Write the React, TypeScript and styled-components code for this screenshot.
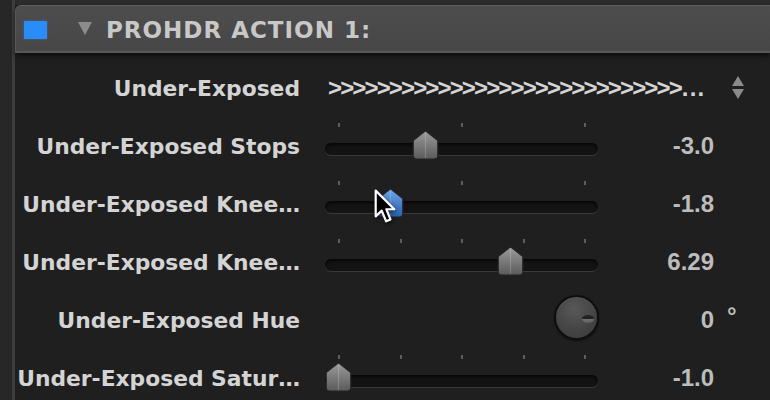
import React from "react";
import styled, { createGlobalStyle } from "styled-components";

const Global = createGlobalStyle`
  html, body { margin: 0; padding: 0; background: #1f1f1f; }
  #root { width: 770px; height: 400px; }
`;

const Page = styled.div`
  display: flex;
  width: 770px;
  height: 400px;
  overflow: hidden;
  background: #1f1f1f;
`;

const Gutter = styled.div`
  flex-shrink: 0;
  width: 12px;
  background: #272727;
  border-right: 3px solid #3d3d3d;
`;

const Panel = styled.div`
  flex: 1;
  display: flex;
  flex-direction: column;
  padding-top: 5px;
  background: linear-gradient(#2b2b2b 0 5px, #1f1f1f 5px);
`;

const Header = styled.div`
  position: relative;
  z-index: 1;
  flex-shrink: 0;
  height: 45px;
  display: flex;
  align-items: center;
  padding-left: 8px;
  background: linear-gradient(#4d4d4d, #474747);
  border-top: 1px solid #5e5e5e;
  border-left: 1px solid #575757;
  border-bottom: 2px solid #585858;
  border-top-left-radius: 6px;
  box-shadow: 0 3px 5px rgba(0, 0, 0, 0.6);
`;

const ColorChip = styled.span`
  width: 23px;
  height: 18px;
  margin-top: 2px;
  border-radius: 1px;
  background: #2a8cf8;
  box-shadow: 0 0 2px rgba(42, 140, 248, 0.6);
`;

const Disclosure = styled.svg`
  margin-left: 31px;
  width: 14px;
  height: 13px;
`;

const Title = styled.span`
  margin-left: 14px;
  margin-top: 2px;
  font-family: "DejaVu Sans", sans-serif;
  font-weight: bold;
  font-size: 23px;
  letter-spacing: 1px;
  color: #c8c8c8;
  white-space: nowrap;
`;

const Rows = styled.div`
  flex-shrink: 0;
  display: flex;
  flex-direction: column;
  padding-top: 6px;
`;

const Row = styled.div`
  flex-shrink: 0;
  display: grid;
  grid-template-columns: 285px 300px 114px 1fr;
  align-items: center;
  height: 58px;
`;

const Label = styled.div`
  font-family: "DejaVu Sans", sans-serif;
  font-weight: bold;
  font-size: 21.8px;
  color: #d4d4d4;
  text-align: right;
  white-space: nowrap;
`;

const Value = styled.div`
  grid-column: 3;
  font-family: "Liberation Sans", Arial, sans-serif;
  font-weight: bold;
  font-size: 24px;
  color: #bcbcbc;
  text-align: right;
`;

const Unit = styled.div`
  grid-column: 4;
  margin-left: 13px;
  margin-top: -8px;
  font-family: "Liberation Sans", Arial, sans-serif;
  font-weight: bold;
  font-size: 24px;
  color: #bcbcbc;
`;

const Popup = styled.div`
  grid-column: 2 / span 2;
  padding-left: 28px;
  font-family: "Liberation Sans", Arial, sans-serif;
  font-weight: bold;
  font-size: 24px;
  letter-spacing: -1.85px;
  color: #d4d4d4;
  white-space: nowrap;
  overflow: hidden;
`;

const Dots = styled.span`
  letter-spacing: 1.2px;
  margin-left: 1px;
  font-size: 24px;
`;

const Stepper = styled.svg`
  grid-column: 4;
  margin-left: 18px;
  width: 12px;
  height: 24px;
`;

const SliderBox = styled.div`
  position: relative;
  align-self: stretch;
  display: flex;
  flex-direction: column;
  margin-left: 25px;
  width: 273px;
`;

const Ticks = styled.div`
  display: flex;
  justify-content: space-between;
  height: 4px;
  padding: 6px 12px 0 13px;
`;

const Tick = styled.span`
  width: 2px;
  height: 4px;
  background: #5c5c5c;
`;

const Track = styled.div`
  margin-top: 16px;
  height: 12px;
  border-radius: 6px;
  background: #131313;
  box-shadow: inset 0 2px 3px rgba(0, 0, 0, 0.7), 0 1px 0 #393939;
`;

const ThumbSvg = styled.svg`
  position: absolute;
  top: 13px;
  width: 27px;
  height: 30px;
`;

const Pointer = styled.svg`
  position: absolute;
  width: 22px;
  height: 35px;
  filter: drop-shadow(1px 2px 2px rgba(0, 0, 0, 0.6));
`;

const KnobWrap = styled.div`
  grid-column: 2;
  justify-self: end;
  margin-right: 1px;
  position: relative;
  width: 45px;
  height: 45px;
  margin-top: -6px;
  box-sizing: border-box;
  border-radius: 50%;
  border: 2px solid #0e0e0e;
  background: radial-gradient(circle at 45% 30%, #585858, #454545 55%, #393939);
  box-shadow: 0 1px 2px rgba(0, 0, 0, 0.6), inset 0 1px 0 rgba(255, 255, 255, 0.08);
`;

const KnobMark = styled.span`
  position: absolute;
  left: 26px;
  top: 18px;
  width: 12px;
  height: 8px;
  border-radius: 50%;
  background: linear-gradient(#222 0 45%, #707070 55%, #5c5c5c);
`;

type Variant = "gray" | "blue";

const Thumb: React.FC<{ x: number; variant: Variant }> = ({ x, variant }) => {
  const id = `g-${variant}`;
  const top = variant === "blue" ? "#6ea6ea" : "#9c9c9c";
  const bot = variant === "blue" ? "#2a5fae" : "#5a5a5a";
  return (
    <ThumbSvg viewBox="0 0 27 30" style={{ left: x - 13 }}>
      <defs>
        <linearGradient id={id} x1="0" y1="0" x2="0" y2="1">
          <stop offset="0" stopColor={top} />
          <stop offset="1" stopColor={bot} />
        </linearGradient>
      </defs>
      <path
        d="M13.5 0.8 L25.8 10.5 L25.8 25.5 Q25.8 29 22.3 29 L4.7 29 Q1.2 29 1.2 25.5 L1.2 10.5 Z"
        fill={`url(#${id})`}
        stroke="#242424"
        strokeWidth="1.2"
      />
      <line x1="13.5" y1="3" x2="13.5" y2="28" stroke="rgba(255,255,255,0.18)" strokeWidth="1.2" />
    </ThumbSvg>
  );
};

const Slider: React.FC<{
  ticks: number;
  pos: number;
  variant?: Variant;
  cursor?: boolean;
}> = ({ ticks, pos, variant = "gray", cursor }) => (
  <SliderBox>
    <Ticks>
      {Array.from({ length: ticks }).map((_, i) => (
        <Tick key={i} />
      ))}
    </Ticks>
    <Track />
    <Thumb x={13 + pos * 248} variant={variant} />
    {cursor && (
      <Pointer viewBox="0 0 20 32" style={{ left: 49, top: 14 }}>
        <path
          d="M1.5 1.5 L1.5 25 L7 19.8 L11 29.5 L15 27.8 L11.2 18.5 L18.5 18.5 Z"
          fill="#000"
          stroke="#fff"
          strokeWidth="2"
          strokeLinejoin="round"
        />
      </Pointer>
    )}
  </SliderBox>
);

export default function App() {
  return (
    <>
      <Global />
      <Page>
        <Gutter />
        <Panel>
          <Header>
            <ColorChip />
            <Disclosure viewBox="0 0 14 13">
              <path d="M0 0 L14 0 L7 13 Z" fill="#8c8c8c" />
            </Disclosure>
            <Title>PROHDR ACTION 1:</Title>
          </Header>
          <Rows>
            <Row>
              <Label>Under-Exposed</Label>
              <Popup>
                {">".repeat(29)}
                <Dots>...</Dots>
              </Popup>
              <Stepper viewBox="0 0 12 24">
                <path d="M6 0 L12 10 L0 10 Z" fill="#8a8a8a" />
                <path d="M0 13 L12 13 L6 23 Z" fill="#8a8a8a" />
              </Stepper>
            </Row>
            <Row>
              <Label>Under-Exposed Stops</Label>
              <Slider ticks={3} pos={0.35} />
              <Value>-3.0</Value>
            </Row>
            <Row>
              <Label>Under-Exposed Knee…</Label>
              <Slider ticks={3} pos={0.21} variant="blue" cursor />
              <Value>-1.8</Value>
            </Row>
            <Row>
              <Label>Under-Exposed Knee…</Label>
              <Slider ticks={5} pos={0.694} />
              <Value>6.29</Value>
            </Row>
            <Row>
              <Label>Under-Exposed Hue</Label>
              <KnobWrap>
                <KnobMark />
              </KnobWrap>
              <Value>0</Value>
              <Unit>°</Unit>
            </Row>
            <Row>
              <Label>Under-Exposed Satur…</Label>
              <Slider ticks={5} pos={0} />
              <Value>-1.0</Value>
            </Row>
          </Rows>
        </Panel>
      </Page>
    </>
  );
}
